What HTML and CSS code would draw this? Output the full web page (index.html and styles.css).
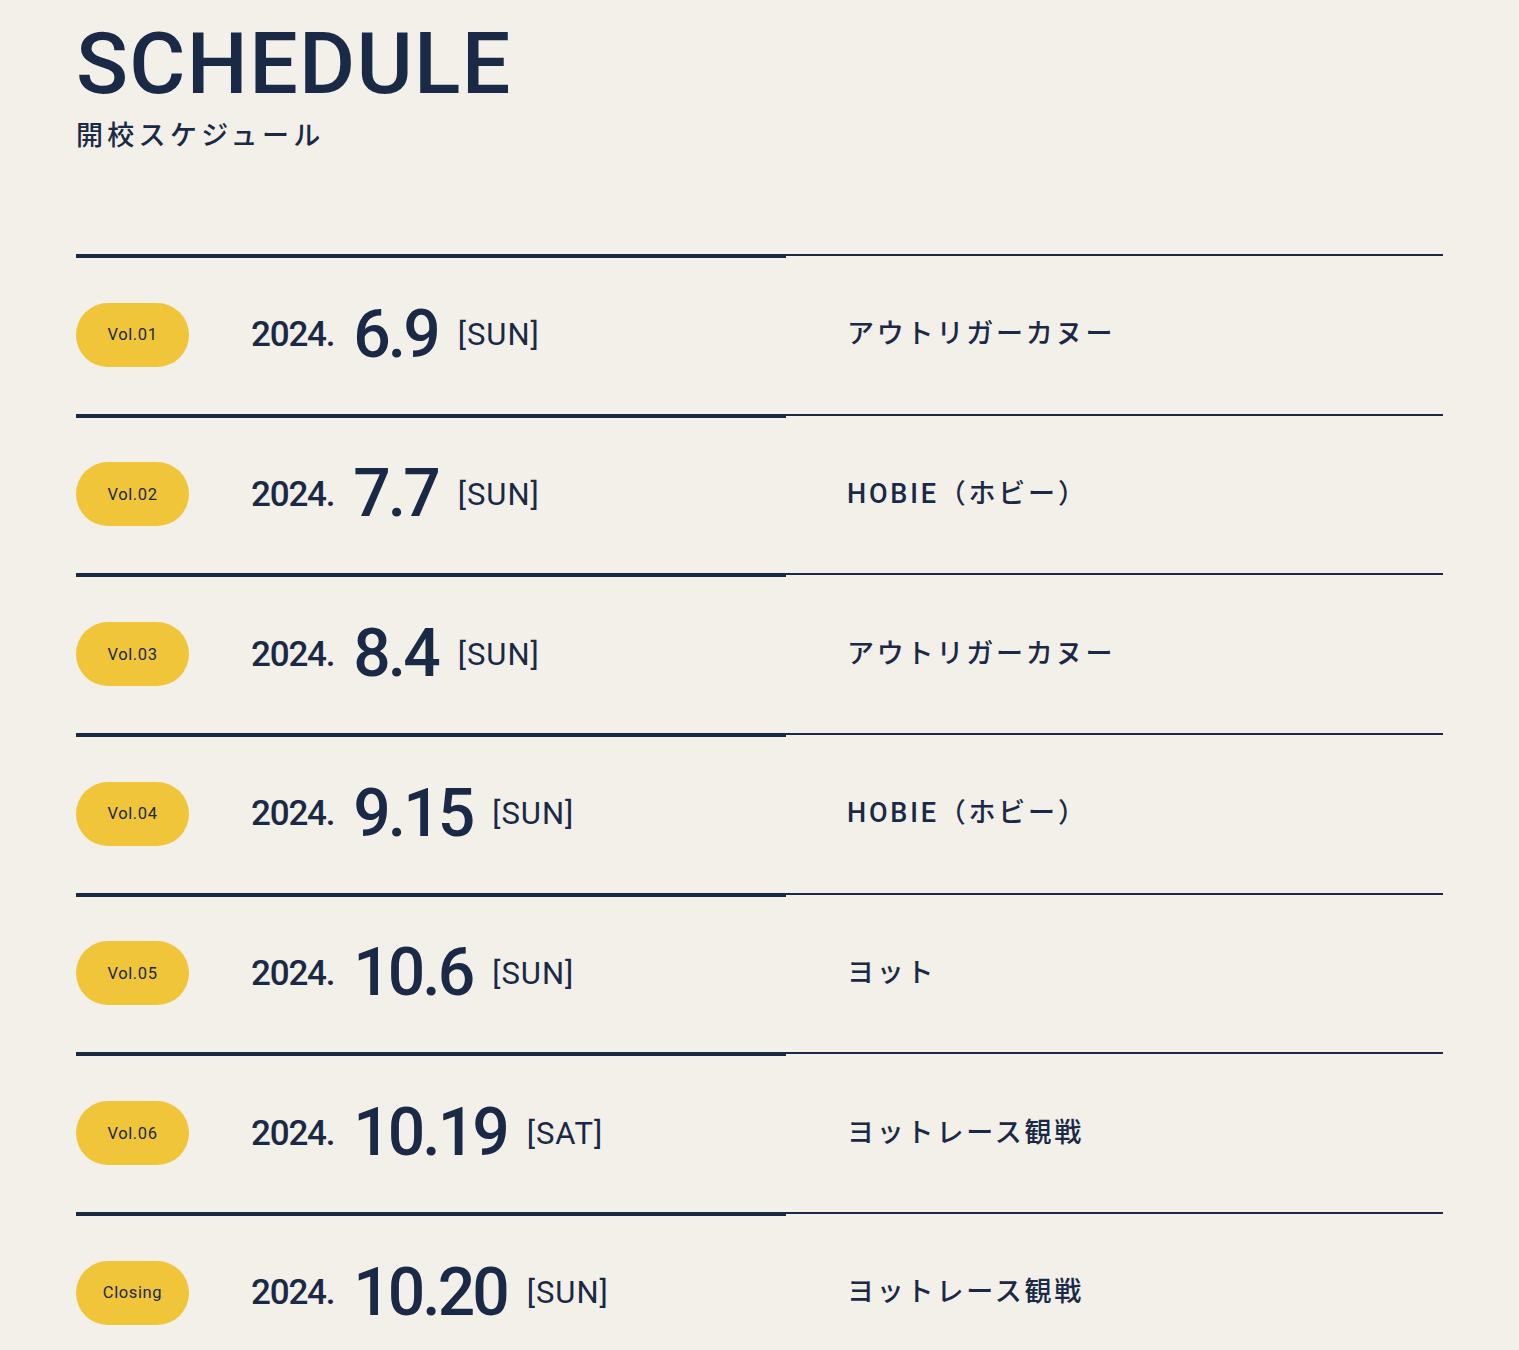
FILE: index.html
```html
<!DOCTYPE html>
<html lang="ja">
<head>
<meta charset="utf-8">
<title>SCHEDULE</title>
<link rel="stylesheet" href="styles.css">
</head>
<body>
<section class="schedule">
  <h1 class="title">SCHEDULE</h1>
  <p class="subtitle">開校スケジュール</p>
  <ul class="list">
    <li class="row">
      <div class="left">
        <span class="badge">Vol.01</span>
        <div class="date"><span class="year">2024.</span><span class="day">6.9</span><span class="week">[SUN]</span></div>
      </div>
      <div class="right"><span class="event">アウトリガーカヌー</span></div>
    </li>
    <li class="row">
      <div class="left">
        <span class="badge">Vol.02</span>
        <div class="date"><span class="year">2024.</span><span class="day">7.7</span><span class="week">[SUN]</span></div>
      </div>
      <div class="right"><span class="event">HOBIE（ホビー）</span></div>
    </li>
    <li class="row">
      <div class="left">
        <span class="badge">Vol.03</span>
        <div class="date"><span class="year">2024.</span><span class="day">8.4</span><span class="week">[SUN]</span></div>
      </div>
      <div class="right"><span class="event">アウトリガーカヌー</span></div>
    </li>
    <li class="row">
      <div class="left">
        <span class="badge">Vol.04</span>
        <div class="date"><span class="year">2024.</span><span class="day">9.15</span><span class="week">[SUN]</span></div>
      </div>
      <div class="right"><span class="event">HOBIE（ホビー）</span></div>
    </li>
    <li class="row">
      <div class="left">
        <span class="badge">Vol.05</span>
        <div class="date"><span class="year">2024.</span><span class="day">10.6</span><span class="week">[SUN]</span></div>
      </div>
      <div class="right"><span class="event">ヨット</span></div>
    </li>
    <li class="row">
      <div class="left">
        <span class="badge">Vol.06</span>
        <div class="date"><span class="year">2024.</span><span class="day">10.19</span><span class="week">[SAT]</span></div>
      </div>
      <div class="right"><span class="event">ヨットレース観戦</span></div>
    </li>
    <li class="row">
      <div class="left">
        <span class="badge">Closing</span>
        <div class="date"><span class="year">2024.</span><span class="day">10.20</span><span class="week">[SUN]</span></div>
      </div>
      <div class="right"><span class="event">ヨットレース観戦</span></div>
    </li>
  </ul>
</section>
</body>
</html>
```
FILE: styles.css
```css
html, body {
  margin: 0;
  padding: 0;
  background: #f3efe9;
}
body {
  color: #1a2946;
  font-family: Roboto, "Noto Sans CJK JP", sans-serif;
}
.schedule {
  padding: 21px 76px 0;
}
.title {
  margin: 0;
  font-family: Roboto, sans-serif;
  font-weight: 500;
  font-size: 86px;
  line-height: 1;
  letter-spacing: 1.3px;
}
.subtitle {
  margin: 13px 0 0;
  font-family: "Noto Sans CJK JP", sans-serif;
  font-weight: 500;
  font-size: 27px;
  line-height: 1;
  letter-spacing: 4.3px;
}
.list {
  list-style: none;
  margin: 107px 0 0;
  padding: 0;
}
.row {
  position: relative;
  display: grid;
  grid-template-columns: 710px 1fr;
  height: 159.67px;
  box-sizing: border-box;
  border-top: 2px solid #1a2946;
}
.row::before {
  content: "";
  position: absolute;
  left: 0;
  top: -2px;
  width: 710px;
  height: 4px;
  background: #1a2946;
}
.left {
  display: flex;
  align-items: center;
}
.badge {
  display: flex;
  align-items: center;
  justify-content: center;
  width: 113px;
  height: 64px;
  border-radius: 32px;
  background: #f0c53a;
  font-family: Roboto, sans-serif;
  font-weight: 400;
  font-size: 16.5px;
  letter-spacing: 0.6px;
  color: #1a2946;
}
.date {
  display: flex;
  align-items: center;
  margin-left: 62px;
  font-family: Roboto, sans-serif;
  font-weight: 500;
  line-height: 1;
}
.year {
  font-size: 35px;
  letter-spacing: -1.2px;
}
.day {
  font-size: 66px;
  letter-spacing: -3px;
  margin-left: 19px;
}
.week {
  font-size: 31px;
  font-weight: 400;
  letter-spacing: 1px;
  margin-left: 20px;
}
.right {
  display: flex;
  align-items: center;
  padding-left: 61px;
}
.event {
  font-family: Roboto, "Noto Sans CJK JP", sans-serif;
  font-weight: 500;
  font-size: 27px;
  letter-spacing: 2.8px;
  line-height: 1;
}
```
